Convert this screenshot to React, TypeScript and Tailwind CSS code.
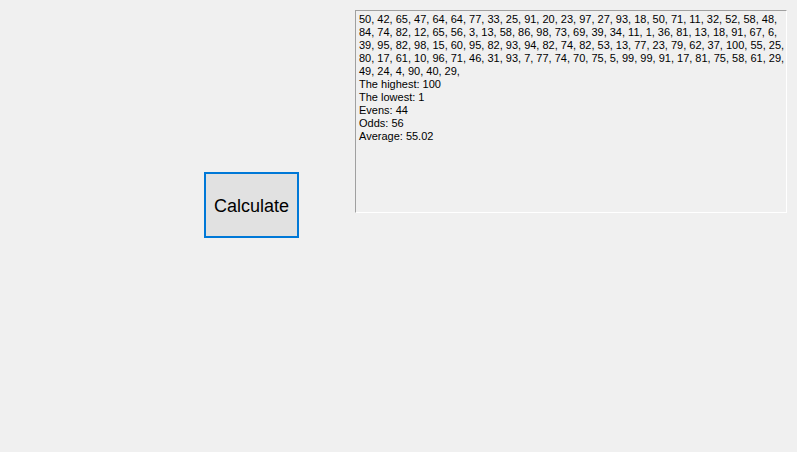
const lines = [
  "50, 42, 65, 47, 64, 64, 77, 33, 25, 91, 20, 23, 97, 27, 93, 18, 50, 71, 11, 32, 52, 58, 48,",
  "84, 74, 82, 12, 65, 56, 3, 13, 58, 86, 98, 73, 69, 39, 34, 11, 1, 36, 81, 13, 18, 91, 67, 6,",
  "39, 95, 82, 98, 15, 60, 95, 82, 93, 94, 82, 74, 82, 53, 13, 77, 23, 79, 62, 37, 100, 55, 25,",
  "80, 17, 61, 10, 96, 71, 46, 31, 93, 7, 77, 74, 70, 75, 5, 99, 99, 91, 17, 81, 75, 58, 61, 29,",
  "49, 24, 4, 90, 40, 29,",
  "The highest: 100",
  "The lowest: 1",
  "Evens: 44",
  "Odds: 56",
  "Average: 55.02",
];

export default function App() {
  return (
    <div
      className="w-[797px] h-[452px] bg-[#f0f0f0] flex items-start"
      style={{ fontFamily: '"Liberation Sans", Arial, sans-serif' }}
    >
      {/* Calculate button */}
      <button className="ml-[204px] mt-[172px] w-[95px] h-[66px] bg-[#e1e1e1] border-2 border-[#0078d7] pt-[2px] text-[18px] text-black flex items-center justify-center">
        Calculate
      </button>

      {/* Output text box */}
      <div className="ml-[56px] mt-[10px] w-[432px] h-[203px] bg-[#f0f0f0] border border-t-[#a0a0a0] border-l-[#a0a0a0] border-r-white border-b-white pl-[3px] pt-[2px] text-[11px] leading-[13px] text-black">
        {lines.map((line, i) => (
          <div key={i} className="whitespace-pre">
            {line}
          </div>
        ))}
      </div>
    </div>
  );
}
